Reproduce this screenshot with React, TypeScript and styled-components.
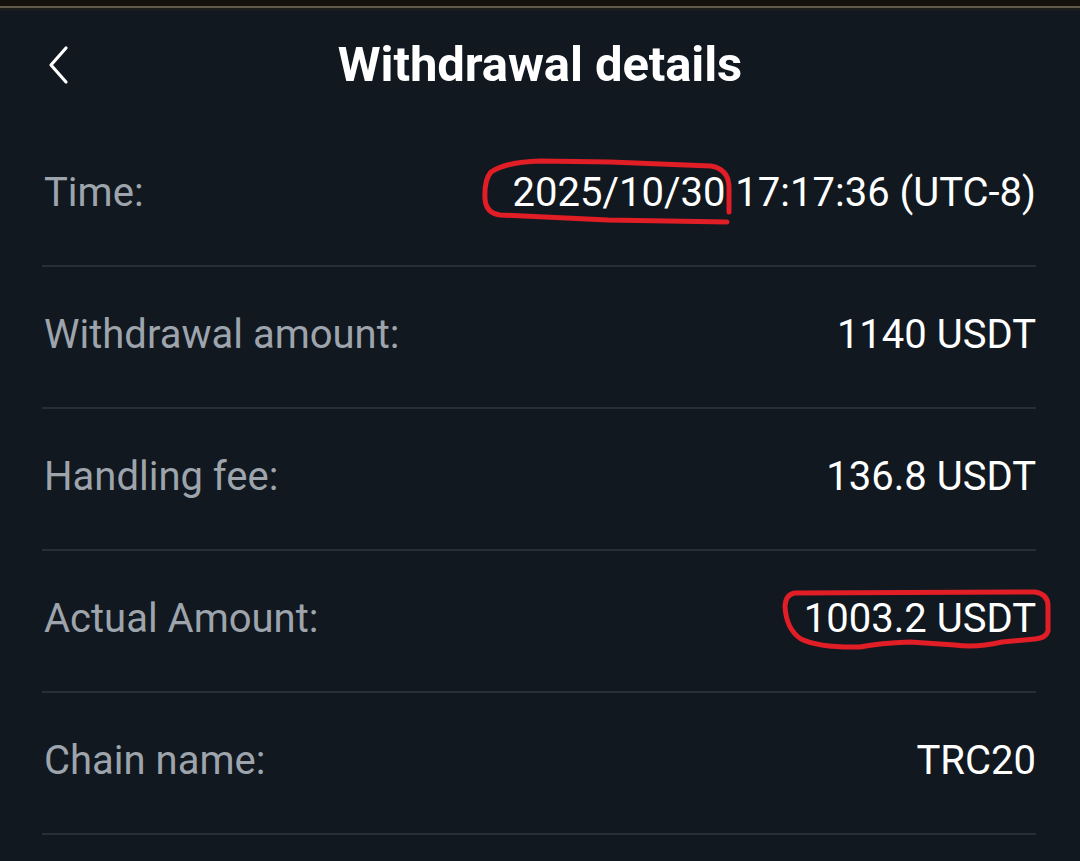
import React from "react";
import styled, { createGlobalStyle } from "styled-components";

const Global = createGlobalStyle`
  html, body { margin: 0; padding: 0; background: #111820; }
  body { font-family: Roboto, "Liberation Sans", Arial, sans-serif; }
  * { box-sizing: border-box; }
`;

const Page = styled.div`
  position: relative;
  width: 1080px;
  height: 861px;
  overflow: hidden;
  background: #111820;
  display: flex;
  flex-direction: column;
`;

const TopStrip = styled.div`
  height: 11px;
  flex: none;
  background: linear-gradient(
    to bottom,
    #14110c 0px,
    #14110c 6px,
    #5f5a4c 6px,
    #5f5a4c 8px,
    #1b1d1d 8px,
    #1b1d1d 11px
  );
`;

const Header = styled.header`
  height: 114px;
  flex: none;
  display: flex;
  align-items: center;
  justify-content: center;
  position: relative;
  padding-bottom: 6px;
`;

const BackButton = styled.button`
  position: absolute;
  left: 40px;
  top: 50%;
  transform: translateY(calc(-50% - 3px));
  background: none;
  border: none;
  padding: 6px;
  display: flex;
  cursor: pointer;
`;

const Title = styled.h1`
  margin: 0;
  font-size: 49px;
  font-weight: 700;
  color: #ffffff;
  letter-spacing: -0.1px;
  line-height: 56px;
`;

const List = styled.div`
  padding: 0 44px 0 42px;
  display: flex;
  flex-direction: column;
`;

const Row = styled.div`
  display: flex;
  justify-content: space-between;
  align-items: center;
  padding: 44px 0 48px 2px;
  border-bottom: 2px solid #272e36;
  line-height: 48px;
  font-size: 40px;
`;

const Label = styled.span`
  color: #9ea4ac;
`;

const Value = styled.span`
  color: #ffffff;
  white-space: pre;
`;

const Marks = styled.svg`
  position: absolute;
  left: 0;
  top: 0;
  pointer-events: none;
`;

const rows: { label: string; value: string }[] = [
  { label: "Time:", value: "2025/10/30 17:17:36 (UTC-8)" },
  { label: "Withdrawal amount:", value: "1140 USDT" },
  { label: "Handling fee:", value: "136.8 USDT" },
  { label: "Actual Amount:", value: "1003.2 USDT" },
  { label: "Chain name:", value: "TRC20" },
];

export default function App() {
  return (
    <Page>
      <Global />
      <TopStrip />
      <Header>
        <BackButton aria-label="Back">
          <svg width="26" height="40" viewBox="0 0 26 40" fill="none">
            <path
              d="M20 3 L5 20 L20 37"
              stroke="#ffffff"
              strokeWidth="3.2"
              strokeLinecap="round"
              strokeLinejoin="round"
            />
          </svg>
        </BackButton>
        <Title>Withdrawal details</Title>
      </Header>
      <List>
        {rows.map((r) => (
          <Row key={r.label}>
            <Label>{r.label}</Label>
            <Value>{r.value}</Value>
          </Row>
        ))}
      </List>
      <Marks width="1080" height="861" viewBox="0 0 1080 861" fill="none">
        <path
          d="M729 212 L729 186 Q728 169 711 166 L610 162 L540 161 Q506 162 491 172 Q484 180 485 199 Q486 213 500 215 L608 220 L727 222"
          stroke="#e11d26"
          strokeWidth="5"
          strokeLinecap="round"
          strokeLinejoin="round"
        />
        <path
          d="M795 593 L1035 592 Q1048 594 1048 606 L1048 631 Q1046 638 1035 639 L1002 642 Q976 648 955 645 L910 642 Q880 643 860 647 Q820 648 801 639 Q786 629 785 606 Q786 594 795 593 Z"
          stroke="#e11d26"
          strokeWidth="5"
          strokeLinecap="round"
          strokeLinejoin="round"
        />
      </Marks>
    </Page>
  );
}
